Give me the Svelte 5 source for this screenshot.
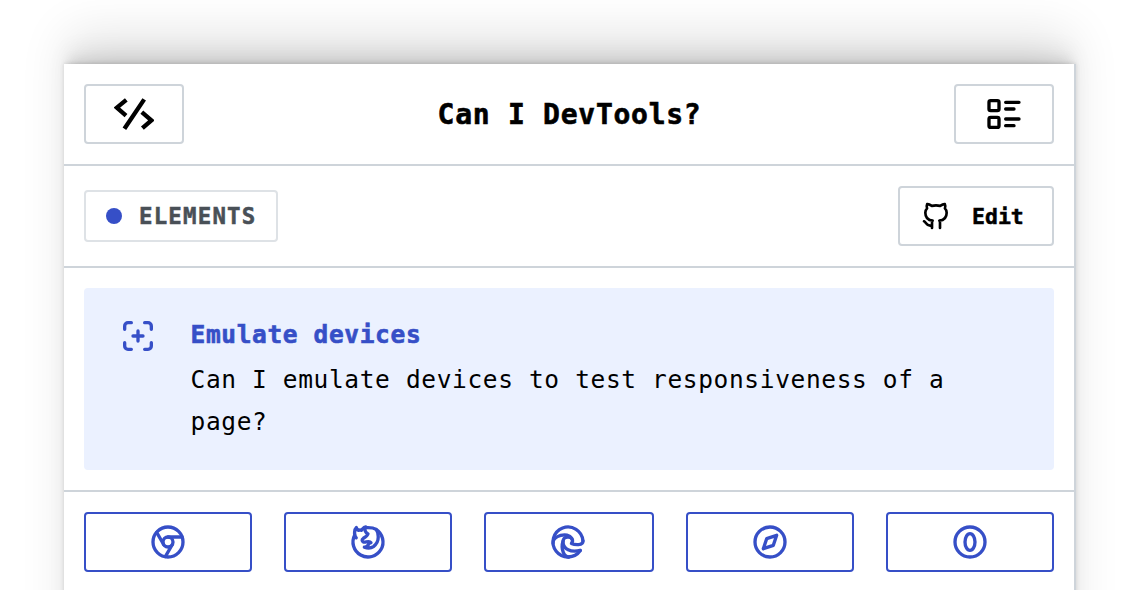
<script>
  const browsers = [
    {
      name: 'Chrome',
      paths: [
        'M3 12a9 9 0 1 0 18 0a9 9 0 1 0 -18 0',
        'M9 12a3 3 0 1 0 6 0a3 3 0 1 0 -6 0',
        'M12 9h8.4',
        'M14.598 13.5l-4.2 7.275',
        'M9.402 13.5l-4.2 -7.275'
      ]
    },
    {
      name: 'Firefox',
      paths: [
        'M4.028 7.82a9 9 0 1 0 12.823 -3.4c-1.636 -1.02 -3.064 -1.02 -4.851 -1.02h-1.647',
        'M4.914 9.485c-1.756 -1.569 -.805 -5.38 .109 -6.17c.086 .896 .585 1.208 1.111 1.685c.88 -.275 1.313 -.282 1.867 0c.82 -.91 1.694 -2.354 2.628 -2.093c-1.082 1.741 -.07 3.733 1.371 4.173c-.17 .975 -1.484 1.913 -2.76 2.686c-1.296 .938 -.722 1.85 0 2.234c.949 .506 3.611 -1 4.545 .354c-1.698 .102 -1.536 3.107 -3.983 2.727c2.523 .957 4.345 .462 5.458 -.34c1.965 -1.52 2.879 -3.542 2.879 -5.557c-.014 -1.398 .194 -2.695 -1.26 -4.75'
      ]
    },
    {
      name: 'Edge',
      paths: [
        'M20.978 11.372a9 9 0 1 0 -1.593 5.773',
        'M20.978 11.372c.21 2.993 -5.034 2.413 -6.913 1.486c1.392 -1.6 .402 -4.038 -2.274 -3.851c-1.745 .122 -2.927 1.157 -2.784 3.202c.28 3.99 4.444 6.205 10.36 4.79',
        'M3.022 12.628c-.283 -4.043 8.717 -7.228 11.248 -2.688',
        'M12.628 20.978c-2.993 .21 -5.162 -4.725 -3.567 -9.748'
      ]
    },
    {
      name: 'Safari',
      paths: ['M8 16l2 -6l6 -2l-2 6l-6 2', 'M3 12a9 9 0 1 0 18 0a9 9 0 1 0 -18 0']
    },
    {
      name: 'Opera',
      paths: ['M3 12a9 9 0 1 0 18 0a9 9 0 1 0 -18 0', 'M9 12a3 5 0 1 0 6 0a3 5 0 1 0 -6 0']
    }
  ];
</script>

<div class="stage">
<main class="panel">
  <header class="row">
    <button class="btn icon-btn">
      <svg width="40" height="40" viewBox="0 0 40 40" fill="none" stroke="currentColor" stroke-width="4.3">
        <path d="M12.3 5.8L2.8 13.7L12 21.7M30.2 5.4L10.4 34.8M27.8 18.1L37.4 26.3L28.4 34.2" />
      </svg>
    </button>
    <h1>Can I DevTools?</h1>
    <button class="btn icon-btn">
      <svg class="icon" width="40" height="40" viewBox="0 0 24 24">
        <path d="M13 5h8M13 9h5M13 15h8M13 19h5" />
        <rect x="3" y="4" width="6" height="6" rx="1" />
        <rect x="3" y="14" width="6" height="6" rx="1" />
      </svg>
    </button>
  </header>

  <div class="row">
    <span class="tag"><span class="dot"></span><span>ELEMENTS</span></span>
    <button class="btn edit">
      <svg class="icon" width="32" height="32" viewBox="0 0 24 24">
        <path d="M9 19c-4.3 1.4 -4.3 -2.5 -6 -3m12 5v-3.5c0 -1 .1 -1.4 -.5 -2c2.8 -.3 5.5 -1.4 5.5 -6a4.6 4.6 0 0 0 -1.3 -3.2a4.2 4.2 0 0 0 -.1 -3.2s-1.1 -.3 -3.5 1.3a12.3 12.3 0 0 0 -6.2 0c-2.4 -1.6 -3.5 -1.3 -3.5 -1.3a4.2 4.2 0 0 0 -.1 3.2a4.6 4.6 0 0 0 -1.3 3.2c0 4.6 2.7 5.7 5.5 6c-.6 .6 -.6 1.2 -.5 2v3.5" />
      </svg>
      <span>Edit</span>
    </button>
  </div>

  <section class="feature">
    <div class="card">
      <svg class="icon" width="40" height="40" viewBox="0 0 24 24">
        <path d="M4 8v-2a2 2 0 0 1 2 -2h2M4 16v2a2 2 0 0 0 2 2h2M16 4h2a2 2 0 0 1 2 2v2M16 20h2a2 2 0 0 0 2 -2v-2M9 12h6M12 9v6" />
      </svg>
      <div class="copy">
        <h2>Emulate devices</h2>
        <p>Can I emulate devices to test responsiveness of a page?</p>
      </div>
    </div>
  </section>

  <nav class="browsers">
    {#each browsers as browser (browser.name)}
      <button class="btn browser">
        <svg class="icon" width="40" height="40" viewBox="0 0 24 24">
          {#each browser.paths as d}
            <path {d} />
          {/each}
        </svg>
      </button>
    {/each}
  </nav>
</main>
</div>

<style>
  :global(body) {
    margin: 0;
    background: #fff;
  }
  .stage {
    box-sizing: border-box;
    width: 1140px;
    height: 590px;
    padding: 64px 64px 0;
    overflow: clip;
  }
  .panel {
    box-sizing: border-box;
    width: 1012px;
    height: 720px;
    border-right: 2px solid #ced4da;
    background: #fff;
    color: #000;
    font-family: 'DejaVu Sans Mono', monospace;
    box-shadow:
      0 -1px 4px rgba(0, 0, 0, 0.1),
      0 -4px 4px -4px rgba(0, 0, 0, 0.05),
      0 -10px 10px -4px rgba(0, 0, 0, 0.06),
      0 -18px 20px -4px rgba(0, 0, 0, 0.07),
      0 -34px 46px -4px rgba(0, 0, 0, 0.11);
  }
  .row {
    box-sizing: border-box;
    height: 102px;
    padding: 0 20px;
    display: flex;
    align-items: center;
    justify-content: space-between;
    border-bottom: 2px solid #ced4da;
  }
  .btn {
    box-sizing: border-box;
    height: 60px;
    margin: 0;
    padding: 0;
    display: flex;
    align-items: center;
    justify-content: center;
    border: 2px solid #ced4da;
    border-radius: 4px;
    background: #fff;
    color: #000;
    font: bold 21.5px 'DejaVu Sans Mono', monospace;
  }
  .icon-btn {
    width: 100px;
  }
  svg {
    display: block;
    flex: none;
  }
  .icon {
    fill: none;
    stroke: currentColor;
    stroke-width: 2;
    stroke-linecap: round;
    stroke-linejoin: round;
  }
  h1 {
    margin: 0;
    padding: 1px 0 0 1px;
    font-size: 28px;
    line-height: 40px;
    letter-spacing: 0.73px;
    -webkit-text-stroke: 0.6px currentColor;
  }
  .tag {
    box-sizing: border-box;
    width: 194px;
    height: 52px;
    padding-left: 20px;
    display: flex;
    align-items: center;
    gap: 17px;
    border: 2px solid #dee2e6;
    border-radius: 4px;
    color: #495057;
    font-size: 22.4px;
    font-weight: bold;
    letter-spacing: 1.2px;
    -webkit-text-stroke: 0.5px currentColor;
  }
  .dot {
    width: 16px;
    height: 16px;
    border-radius: 50%;
    background: #364fc7;
  }
  .edit {
    width: 156px;
    padding-left: 20px;
    justify-content: flex-start;
    gap: 20px;
    -webkit-text-stroke: 0.5px currentColor;
  }
  .feature {
    padding: 20px;
    border-bottom: 2px solid #ced4da;
  }
  .card {
    box-sizing: border-box;
    height: 182px;
    padding: 28px 34px;
    display: flex;
    gap: 32.5px;
    border-radius: 4px;
    background: #ebf1ff;
  }
  .card .icon {
    color: #364fc7;
  }
  .copy {
    font-size: 24.5px;
    letter-spacing: 0.635px;
  }
  h2 {
    margin: 0;
    color: #364fc7;
    font-size: inherit;
    line-height: 38px;
    -webkit-text-stroke: 0.6px currentColor;
  }
  p {
    margin: 5px 0 0;
    line-height: 42px;
  }
  .browsers {
    padding: 20px;
    display: grid;
    grid-template-columns: 168px 168px 170px 168px 168px;
    column-gap: 32px;
  }
  .browser {
    border-color: #364fc7;
    color: #364fc7;
  }
  .browser:nth-child(3) {
    padding-right: 2px;
  }
</style>
